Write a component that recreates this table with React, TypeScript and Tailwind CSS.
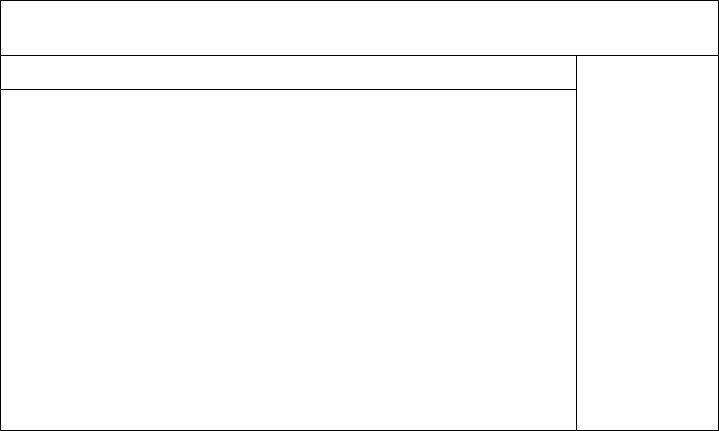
import React from 'react';

export default function App() {
  return (
    <div className="flex h-[431px] w-[719px] flex-col border border-black bg-white">
      <header className="h-[55px] shrink-0 border-b border-black" />
      <div className="flex min-h-0 flex-1">
        <main className="flex w-[576px] shrink-0 flex-col border-r border-black">
          <div className="h-[34px] shrink-0 border-b border-black" />
          <div className="flex-1" />
        </main>
        <aside className="flex-1" />
      </div>
    </div>
  );
}
